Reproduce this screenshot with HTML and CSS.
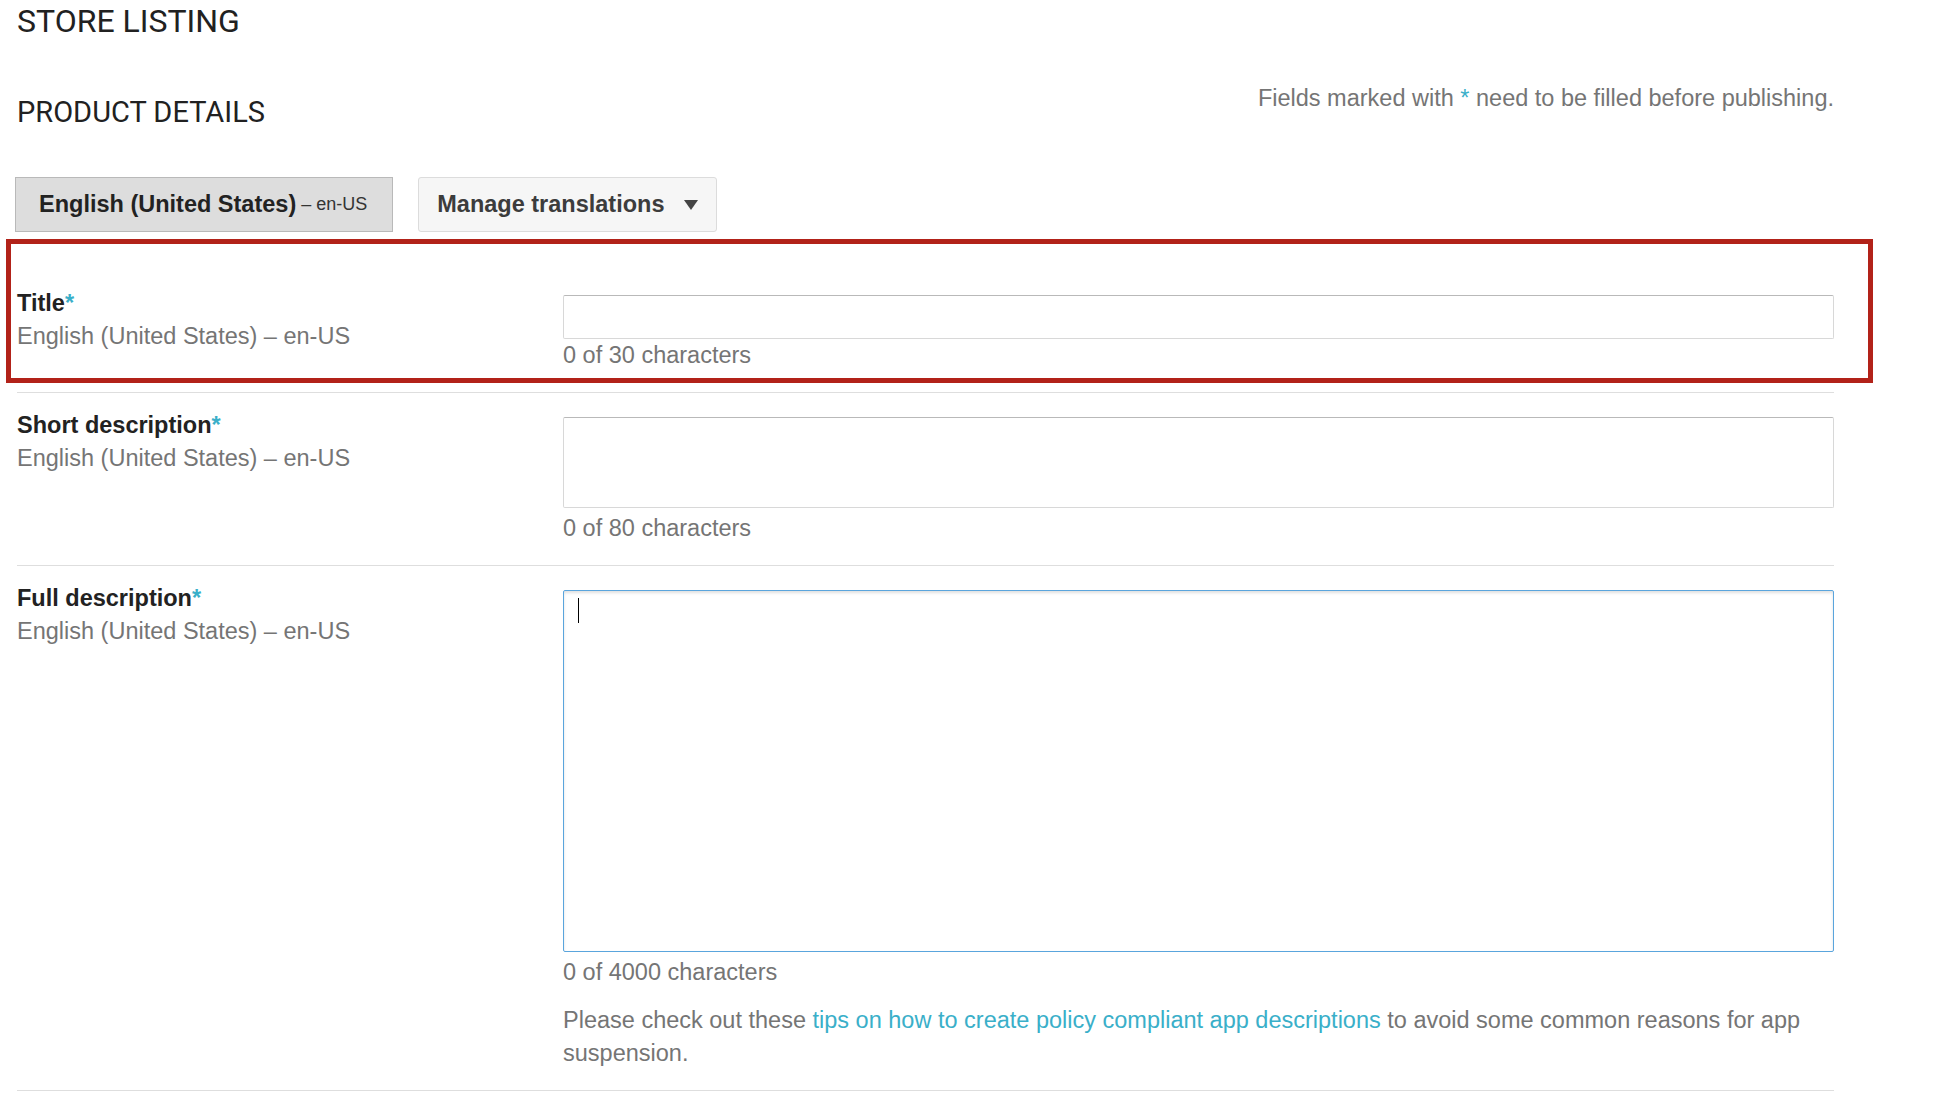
FILE: index.html
```html
<!DOCTYPE html>
<html lang="en">
<head>
    <meta charset="UTF-8">
    <meta name="viewport" content="width=device-width, initial-scale=1.0">
    <title>Store listing</title>
    <link rel="stylesheet" href="styles.css">
</head>
<body>

<div class="page">
    <h1 class="page-title">STORE LISTING</h1>

    <div class="header">
        <h2 class="section-title">PRODUCT DETAILS</h2>
        <p class="notice">Fields marked with <span class="req">*</span> need to be filled before publishing.</p>
    </div>

    <div class="tabs">
        <button class="tab tab-active">English (United States)<span class="tab-code"> &ndash; en-US</span></button>
        <button class="tab tab-menu">Manage translations
            <svg class="arrow" width="14" height="10" viewBox="0 0 14 10"><polygon points="0,0 14,0 7,10" fill="#444"/></svg>
        </button>
    </div>

    <!-- titulo, marcado en rojo -->
    <div class="row highlight">
        <div class="label">
            <div class="name">Title<span class="req">*</span></div>
            <div class="lang">English (United States) &ndash; en-US</div>
        </div>
        <div class="field">
            <input class="text-input" type="text">
            <div class="count">0 of 30 characters</div>
        </div>
    </div>
    <hr class="sep">

    <div class="row">
        <div class="label">
            <div class="name">Short description<span class="req">*</span></div>
            <div class="lang">English (United States) &ndash; en-US</div>
        </div>
        <div class="field">
            <textarea class="text-area short"></textarea>
            <div class="count count-area">0 of 80 characters</div>
        </div>
    </div>
    <hr class="sep">

    <div class="row">
        <div class="label">
            <div class="name">Full description<span class="req">*</span></div>
            <div class="lang">English (United States) &ndash; en-US</div>
        </div>
        <div class="field">
            <div class="text-area long focused"><span class="caret"></span></div>
            <div class="count count-area">0 of 4000 characters</div>
            <p class="tip">Please check out these <a href="#">tips on how to create policy compliant app descriptions</a> to avoid some common reasons for app suspension.</p>
        </div>
    </div>
    <hr class="sep">
</div>

</body>
</html>
```

FILE: styles.css
```css
body {
    margin: 0;
    padding: 0 17px;
    background: #fff;
    color: #222;
    font-family: "Liberation Sans", Arial, sans-serif;
    font-size: 23.5px;
    line-height: 33px;
}

.page {
    width: 1817px;
}

.page-title {
    margin: 1px 0 0;
    font-family: Roboto, "Liberation Sans", sans-serif;
    font-weight: 400;
    font-size: 32px;
    line-height: 40px;
    color: #212121;
}

.header {
    display: flex;
    justify-content: space-between;
    align-items: flex-start;
    margin-top: 41px;
}

.section-title {
    margin: 12px 0 0;
    font-family: Roboto, "Liberation Sans", sans-serif;
    font-weight: 400;
    font-size: 29px;
    line-height: 36px;
    color: #212121;
}

.notice {
    margin: 0;
    color: #757575;
}

.req {
    color: #3aafc9;
}

.tabs {
    display: flex;
    gap: 25px;
    margin: 47px 0 0 -2px;
}

.tab {
    display: flex;
    align-items: center;
    margin: 0;
    padding: 10px 25px 10px 23px;
    font-family: inherit;
    font-size: 23.5px;
    line-height: 33px;
    font-weight: bold;
    border: 1px solid #b9b9b9;
    background: #dddddd;
    color: #222;
}

.tab-code {
    font-weight: normal;
    font-size: 18px;
    color: #333;
    white-space: pre;
}

.tab-menu {
    padding: 10px 18px;
    background: #f6f6f6;
    border-color: #dcdcdc;
    border-radius: 3px;
    color: #3c3c3c;
}

.arrow {
    margin-left: 19px;
}

.row {
    display: grid;
    grid-template-columns: 546px 1fr;
    padding: 16px 0 20px;
}

.highlight {
    position: relative;
    margin-top: 39px;
}

.highlight::after {
    content: "";
    position: absolute;
    top: -32px;
    left: -11px;
    right: -39px;
    bottom: 9px;
    border: 5px solid #b22219;
    pointer-events: none;
}

.name {
    font-weight: bold;
    color: #222;
}

.lang {
    color: #757575;
}

.field {
    padding-top: 8px;
}

.text-input,
.text-area {
    display: block;
    box-sizing: border-box;
    width: 100%;
    margin: 0;
    padding: 7px 14px;
    font: inherit;
    border: 1px solid #d8d8d8;
    border-top-color: #b9b9b9;
    border-radius: 2px;
    background: #fff;
    resize: none;
    outline: none;
}

.text-input {
    height: 44px;
}

.short {
    height: 91px;
}

.long {
    height: 362px;
}

.focused {
    border-color: #5aa5dd;
    box-shadow: inset 0 2px 3px rgba(0, 0, 0, 0.12);
}

.caret {
    display: block;
    width: 1px;
    height: 25px;
    background: #000;
}

.count {
    color: #757575;
}

.count-area {
    margin-top: 4px;
}

.tip {
    margin: 15px 0 0;
    color: #757575;
}

.tip a {
    color: #3aafc9;
    text-decoration: none;
}

.sep {
    margin: 0;
    border: 0;
    border-top: 1px solid #dedede;
}
```
